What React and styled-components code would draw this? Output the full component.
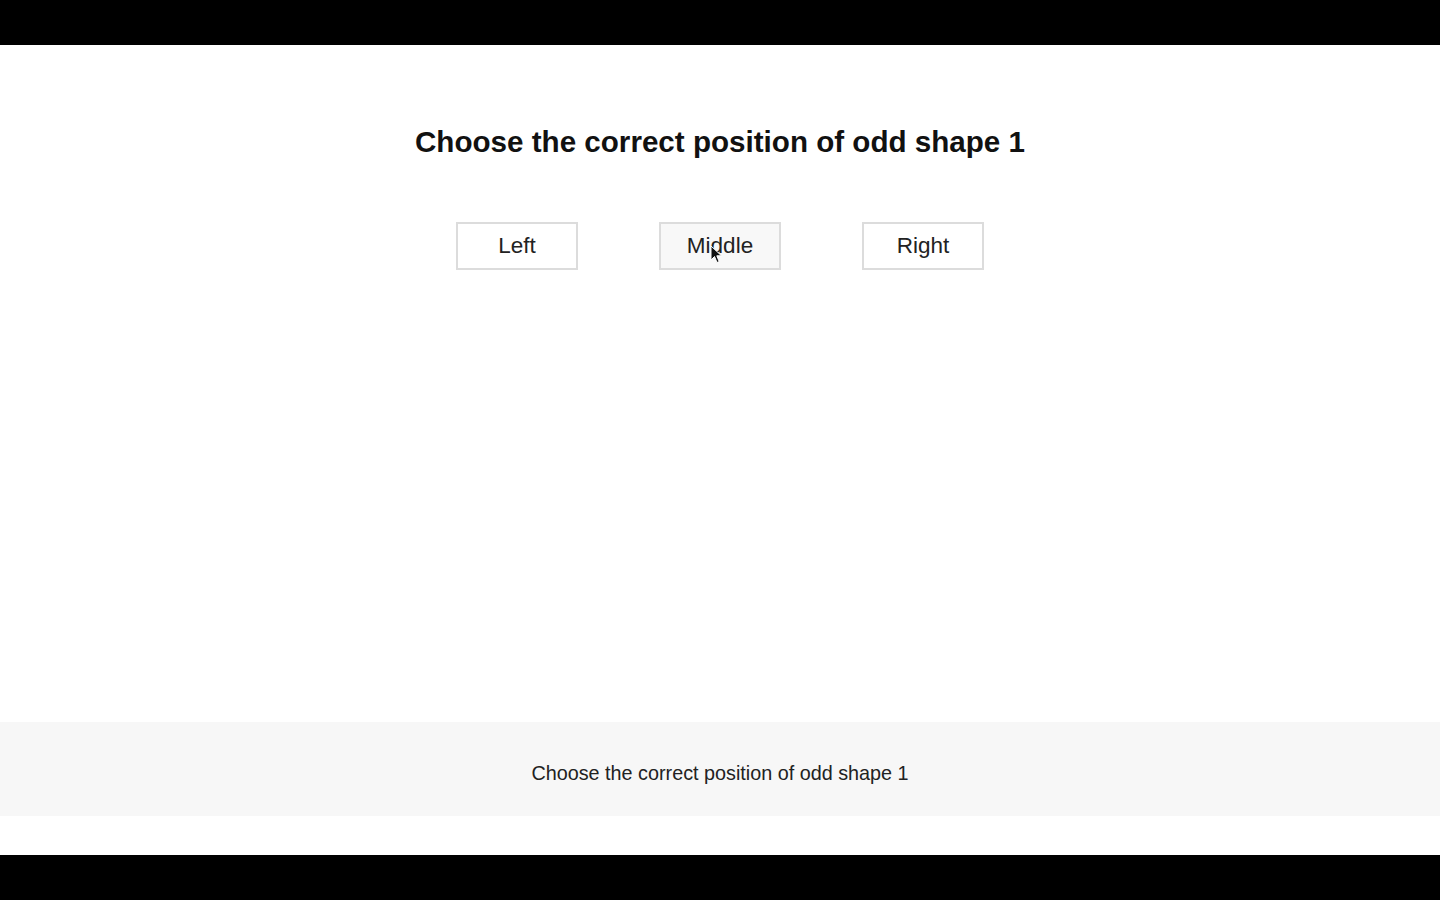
import React from "react";
import styled, { createGlobalStyle } from "styled-components";

const Global = createGlobalStyle`
  html, body { margin: 0; padding: 0; background: #000; }
  body { font-family: "Liberation Sans", Arial, sans-serif; }
`;

const Frame = styled.div`
  height: 900px;
  display: flex;
  flex-direction: column;
  background: #000;
`;

const Bar = styled.div`
  height: ${(p) => p.h}px;
  flex: none;
  background: #000;
`;

const Page = styled.main`
  flex: 1;
  background: #fff;
  display: flex;
  flex-direction: column;
`;

const Content = styled.section`
  height: 677px;
  display: flex;
  flex-direction: column;
  align-items: center;
  padding-top: 80px;
  box-sizing: border-box;
`;

const Title = styled.h1`
  margin: 0;
  font-size: 29.6px;
  font-weight: 700;
  color: #111;
  line-height: 34px;
`;

const Choices = styled.div`
  display: flex;
  gap: 81px;
  margin-top: 63px;
`;

const Choice = styled.button`
  position: relative;
  width: 122px;
  height: 48px;
  border: 2px solid #dcdcdc;
  background: ${(p) => (p.$hover ? "#f8f8f8" : "#fff")};
  font-family: "Liberation Sans", Arial, sans-serif;
  font-size: 22.5px;
  color: #222;
  padding: 0;
  cursor: pointer;
`;

const Cursor = styled.svg`
  position: absolute;
  left: 49px;
  top: 21px;
  width: 13px;
  height: 20px;
  pointer-events: none;
`;

const Footer = styled.footer`
  height: 94px;
  box-sizing: border-box;
  padding-top: 8px;
  background: #f7f7f7;
  display: flex;
  align-items: center;
  justify-content: center;
  font-size: 19.8px;
  color: #222;
`;

export default function App() {
  return (
    <>
      <Global />
      <Frame>
        <Bar h={45} />
        <Page>
          <Content>
            <Title>Choose the correct position of odd shape 1</Title>
            <Choices>
              <Choice>Left</Choice>
              <Choice $hover>
                Middle
                <Cursor viewBox="0 0 13 20">
                  <path
                    d="M1 1 L1 15 L4.5 11.5 L7 17.5 L9.2 16.6 L6.8 10.8 L11.5 10.8 Z"
                    fill="#111"
                    stroke="#fff"
                    strokeWidth="1"
                  />
                </Cursor>
              </Choice>
              <Choice>Right</Choice>
            </Choices>
          </Content>
          <Footer>Choose the correct position of odd shape 1</Footer>
        </Page>
        <Bar h={45} />
      </Frame>
    </>
  );
}
